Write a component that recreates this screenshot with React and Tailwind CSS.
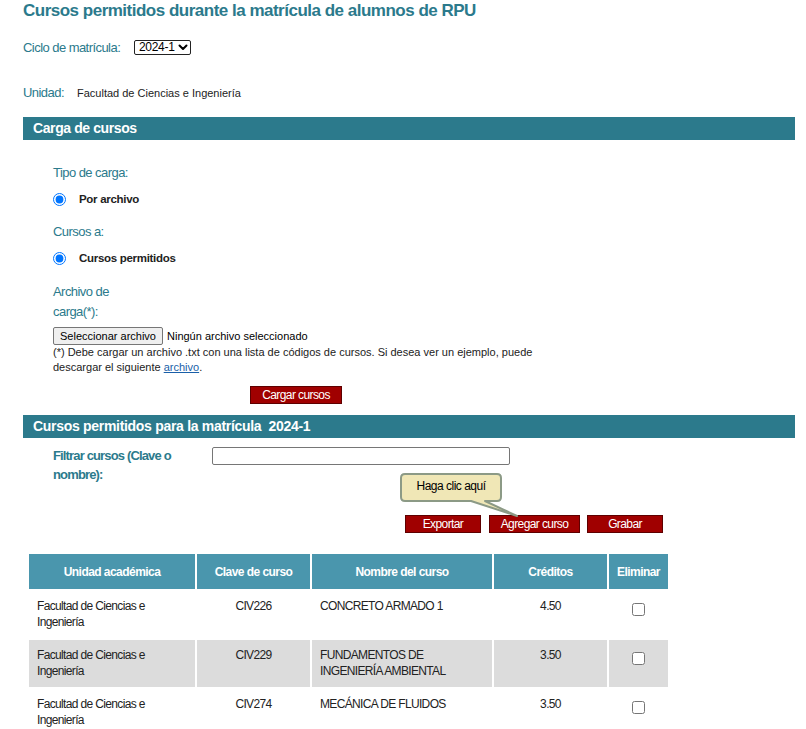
import { useState } from 'react'

// etiquetas "condensadas" (Arial Narrow en el original)
const label = 'text-[13px] tracking-[-0.55px] text-[#2b7a8c]'

const rows = [
  { unidad: 'Facultad de Ciencias e Ingeniería', clave: 'CIV226', nombre: 'CONCRETO ARMADO 1', creditos: '4.50' },
  { unidad: 'Facultad de Ciencias e Ingeniería', clave: 'CIV229', nombre: 'FUNDAMENTOS DE INGENIERÍA AMBIENTAL', creditos: '3.50' },
  { unidad: 'Facultad de Ciencias e Ingeniería', clave: 'CIV274', nombre: 'MECÁNICA DE FLUIDOS', creditos: '3.50' },
]

function RedButton({ children, className = '' }) {
  return (
    <button
      className={`h-[18px] shrink-0 border border-[#5e0000] bg-[#a00000] text-[12px] leading-[16px] tracking-[-0.6px] text-white ${className}`}
    >
      {children}
    </button>
  )
}

function SectionBar({ children, className = '' }) {
  return (
    <div className={`flex h-[23px] items-center bg-[#2c7a8c] pl-[10px] font-bold text-white ${className}`}>
      {children}
    </div>
  )
}

export default function App() {
  const [filtro, setFiltro] = useState('')

  return (
    <div className="min-h-[729px] bg-white pl-[23px] pr-[11px] font-['Liberation_Sans',Arial,sans-serif] text-[#222]">
      {/* título */}
      <h1 className="text-[17px] font-bold leading-[22px] tracking-[-0.5px] text-[#2b7a8c]">
        Cursos permitidos durante la matrícula de alumnos de RPU
      </h1>

      {/* ciclo */}
      <div className="mt-[18px] flex h-[15px] items-center">
        <span className={`w-[111px] whitespace-nowrap ${label}`}>Ciclo de matrícula:</span>
        <div className="relative h-[15px] w-[57px]">
          <select
            defaultValue="2024-1"
            className="block h-[15px] w-[57px] appearance-none rounded-[2px] border border-[#222] bg-white pl-[4px] text-[12px] leading-[13px] tracking-[-0.3px] text-black"
          >
            <option>2024-1</option>
            <option>2023-2</option>
          </select>
          <svg
            width="10"
            height="7"
            viewBox="0 0 10 7"
            className="pointer-events-none absolute right-[3px] top-[4px]"
          >
            <path d="M1.5 1.5 L5 5 L8.5 1.5" fill="none" stroke="#000" strokeWidth="2" strokeLinecap="round" strokeLinejoin="round" />
          </svg>
        </div>
      </div>

      {/* unidad */}
      <div className="mt-[30px] flex h-[16px] items-center">
        <span className={`w-[54px] ${label}`}>Unidad:</span>
        <span className="text-[11px] text-[#222]">Facultad de Ciencias e Ingeniería</span>
      </div>

      {/* carga de cursos */}
      <SectionBar className="mt-[16px] text-[14px] tracking-[-0.4px]">Carga de cursos</SectionBar>

      <div className="pl-[30px]">
        <div className={`mt-[25px] h-[16px] leading-[16px] ${label}`}>Tipo de carga:</div>
        <label className="mt-[11px] flex h-[14px] items-center">
          <input type="radio" name="tipo" defaultChecked className="m-0 h-[13px] w-[13px]" />
          <span className="ml-[13px] mt-[2px] text-[11.5px] font-bold tracking-[-0.3px] text-[#222]">Por archivo</span>
        </label>

        <div className={`mt-[18px] h-[16px] leading-[16px] ${label}`}>Cursos a:</div>
        <label className="mt-[11px] flex h-[14px] items-center">
          <input type="radio" name="cursos" defaultChecked className="m-0 h-[13px] w-[13px]" />
          <span className="ml-[13px] mt-[2px] text-[11.5px] font-bold tracking-[-0.3px] text-[#222]">
            Cursos permitidos
          </span>
        </label>

        <div className={`mt-[17px] w-[64px] leading-[20px] ${label}`}>Archivo de carga(*):</div>

        <div className="mt-[5px] flex h-[18px] items-center">
          <button className="h-[18px] rounded-[2px] border border-[#767676] bg-[#efefef] px-[6px] text-[11px] leading-[16px] text-black">
            Seleccionar archivo
          </button>
          <span className="ml-[4px] text-[11px] text-black">Ningún archivo seleccionado</span>
        </div>

        <p className="w-[490px] text-[11px] leading-[15px] text-[#222]">
          (*) Debe cargar un archivo .txt con una lista de códigos de cursos. Si desea ver un ejemplo, puede descargar el
          siguiente <a href="#" className="text-[#1a5fa8] underline">archivo</a>.
        </p>

        <div className="mt-[11px] flex pl-[197px]">
          <RedButton className="w-[92px]">Cargar cursos</RedButton>
        </div>
      </div>

      {/* cursos permitidos */}
      <SectionBar className="mt-[11px] text-[14px] tracking-[-0.3px]">
        Cursos permitidos para la matrícula&nbsp;&nbsp;2024-1
      </SectionBar>

      <div className="flex pl-[30px] pt-[8px]">
        <div className="w-[159px] text-[13px] font-bold leading-[19px] tracking-[-0.85px] text-[#2b7a8c]">
          Filtrar cursos (Clave o nombre):
        </div>
        <input
          value={filtro}
          onChange={(e) => setFiltro(e.target.value)}
          className="mt-[1px] h-[18px] w-[298px] rounded-[2px] border border-[#767676] bg-white px-1 text-[12px]"
        />
      </div>

      {/* botones con globo de ayuda */}
      <div className="relative mt-[31px] flex pl-[382px]">
        <div className="absolute left-[376px] top-[-43px]">
          <svg width="125" height="48" viewBox="0 0 125 48" className="absolute left-0 top-0">
            <path
              d="M2 6 Q2 2 6 2 L98 2 Q102 2 102 6 L102 25 Q102 29 98 29 L86 29 L118 44 L72 29 L6 29 Q2 29 2 25 Z"
              fill="#f0e7b6"
              stroke="#8c9a86"
              strokeWidth="2"
              strokeLinejoin="round"
            />
          </svg>
          <div className="relative flex h-[31px] w-[104px] items-center justify-center pb-[4px] text-[12px] tracking-[-0.5px] text-black">
            Haga clic aquí
          </div>
        </div>
        <RedButton className="w-[76px]">Exportar</RedButton>
        <RedButton className="ml-[8px] w-[91px]">Agregar curso</RedButton>
        <RedButton className="ml-[7px] w-[76px]">Grabar</RedButton>
      </div>

      {/* tabla */}
      <table className="ml-[4px] mt-[19px] border-separate border-spacing-[2px]">
        <thead>
          <tr className="h-[35px] bg-[#4a96ad] text-[12px] font-bold tracking-[-0.55px] text-white">
            <th className="w-[166px] font-bold">Unidad académica</th>
            <th className="w-[113px] font-bold">Clave de curso</th>
            <th className="w-[180px] font-bold">Nombre del curso</th>
            <th className="w-[113px] font-bold">Créditos</th>
            <th className="w-[59px] font-bold">Eliminar</th>
          </tr>
        </thead>
        <tbody className="text-[12px] leading-[16px] tracking-[-0.65px] text-[#222]">
          {rows.map((r, i) => (
            <tr key={r.clave} className={i % 2 === 1 ? 'bg-[#dcdcdc]' : 'bg-white'}>
              <td className="h-[47px] px-[8px] pb-[6px] pt-[7px] align-top">{r.unidad}</td>
              <td className="pt-[7px] text-center align-top">{r.clave}</td>
              <td className="px-[8px] pt-[7px] align-top">{r.nombre}</td>
              <td className="pt-[7px] text-center align-top">{r.creditos}</td>
              <td className="pt-[12px] text-center align-top leading-none">
                <input type="checkbox" className="m-0 h-[13px] w-[13px]" />
              </td>
            </tr>
          ))}
        </tbody>
      </table>
    </div>
  )
}
